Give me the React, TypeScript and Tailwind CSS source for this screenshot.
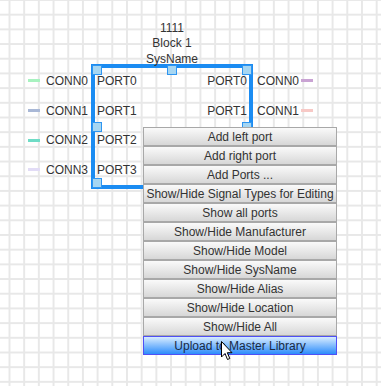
import React from 'react';

const leftConns = [
    { label: 'CONN0', color: '#a8f2c0' },
    { label: 'CONN1', color: '#a9b8d6' },
    { label: 'CONN2', color: '#6fdcc6' },
    { label: 'CONN3', color: '#e2dcf6' },
];

const rightConns = [
    { label: 'CONN0', color: '#c9a3d3' },
    { label: 'CONN1', color: '#f7c9c6' },
];

const menuItems = [
    'Add left port',
    'Add right port',
    'Add Ports ...',
    'Show/Hide Signal Types for Editing',
    'Show all ports',
    'Show/Hide Manufacturer',
    'Show/Hide Model',
    'Show/Hide SysName',
    'Show/Hide Alias',
    'Show/Hide Location',
    'Show/Hide All',
    'Upload to Master Library',
];

const Handle = ({ className }: { className: string }) => (
    <div className={`absolute w-[10px] h-[10px] bg-[#a6d6f2] border border-[#2f95f0] ${className}`} />
);

const App: React.FC = () => {
    return (
        <div className="relative w-[381px] h-[386px] overflow-hidden bg-white bg-[linear-gradient(to_right,#e8e8e8_2px,transparent_2px),linear-gradient(to_bottom,#e8e8e8_2px,transparent_2px)] bg-[size:14.7px_14.7px] bg-[position:8.5px_13.7px] font-['Liberation_Sans',Arial,sans-serif] text-[12px] text-[#333]">
            {/* Block node */}
            <div className="absolute left-[28px] top-[64px] flex">
                <div className="w-[63px] flex flex-col mt-[2px]">
                    {leftConns.map(c => (
                        <div key={c.label} className="h-[29.7px] flex items-center">
                            <span className="w-[12px] h-[3px]" style={{ backgroundColor: c.color }} />
                            <span className="ml-[6px] leading-none">{c.label}</span>
                        </div>
                    ))}
                </div>

                <div className="relative w-[162px] h-[125px] border-4 border-[#1b8cf2]">
                    <div className="absolute bottom-full left-1/2 -translate-x-1/2 -translate-y-[1px] text-center leading-[15.5px] whitespace-nowrap">
                        <div>1111</div>
                        <div>Block 1</div>
                        <div>SysName</div>
                    </div>

                    <div className="flex justify-between -mt-[2px] px-[2px]">
                        <div className="flex flex-col">
                            {['PORT0', 'PORT1', 'PORT2', 'PORT3'].map(p => (
                                <div key={p} className="h-[29.7px] flex items-center">{p}</div>
                            ))}
                        </div>
                        <div className="flex flex-col items-end">
                            {['PORT0', 'PORT1'].map(p => (
                                <div key={p} className="h-[29.7px] flex items-center">{p}</div>
                            ))}
                        </div>
                    </div>

                    <Handle className="-left-[3px] -top-[3px]" />
                    <Handle className="left-1/2 -translate-x-1/2 -top-[3px]" />
                    <Handle className="-right-[3px] -top-[3px]" />
                    <Handle className="-left-[3px] top-1/2 -translate-y-1/2" />
                    <Handle className="-right-[3px] top-1/2 -translate-y-1/2" />
                    <Handle className="-left-[3px] -bottom-[3px]" />
                    <Handle className="left-1/2 -translate-x-1/2 -bottom-[3px]" />
                    <Handle className="-right-[3px] -bottom-[3px]" />
                </div>

                <div className="flex flex-col pl-[4px] mt-[2px]">
                    {rightConns.map(c => (
                        <div key={c.label} className="h-[29.7px] flex items-center">
                            <span className="leading-none">{c.label}</span>
                            <span className="ml-[2px] w-[12px] h-[3px]" style={{ backgroundColor: c.color }} />
                        </div>
                    ))}
                </div>
            </div>

            {/* Context menu */}
            <div className="absolute left-[143px] top-[127px] w-[194px] flex flex-col">
                {menuItems.map((item, i) => {
                    const active = i === menuItems.length - 1;
                    return (
                        <div
                            key={item}
                            className={`h-[19px] flex items-center justify-center whitespace-nowrap leading-none border ${
                                active
                                    ? 'border-[#4f4ff5] bg-[linear-gradient(to_bottom,#d8ecff,#2c8cfb)] text-[#1a2a44]'
                                    : 'border-[#a8a8a8] bg-[linear-gradient(to_bottom,#fafafa,#d7d7d7)]'
                            }`}
                        >
                            {item}
                        </div>
                    );
                })}
            </div>

            {/* Mouse cursor */}
            <svg className="absolute left-[221px] top-[341px]" width="13" height="20" viewBox="0 0 13 20">
                <path d="M0.5 0.5 L0.5 16 L4 12.5 L6.5 18.5 L8.8 17.5 L6.3 11.7 L11 11.7 Z" fill="white" stroke="black" strokeWidth="1" strokeLinejoin="round" />
            </svg>
        </div>
    );
};

export default App;
